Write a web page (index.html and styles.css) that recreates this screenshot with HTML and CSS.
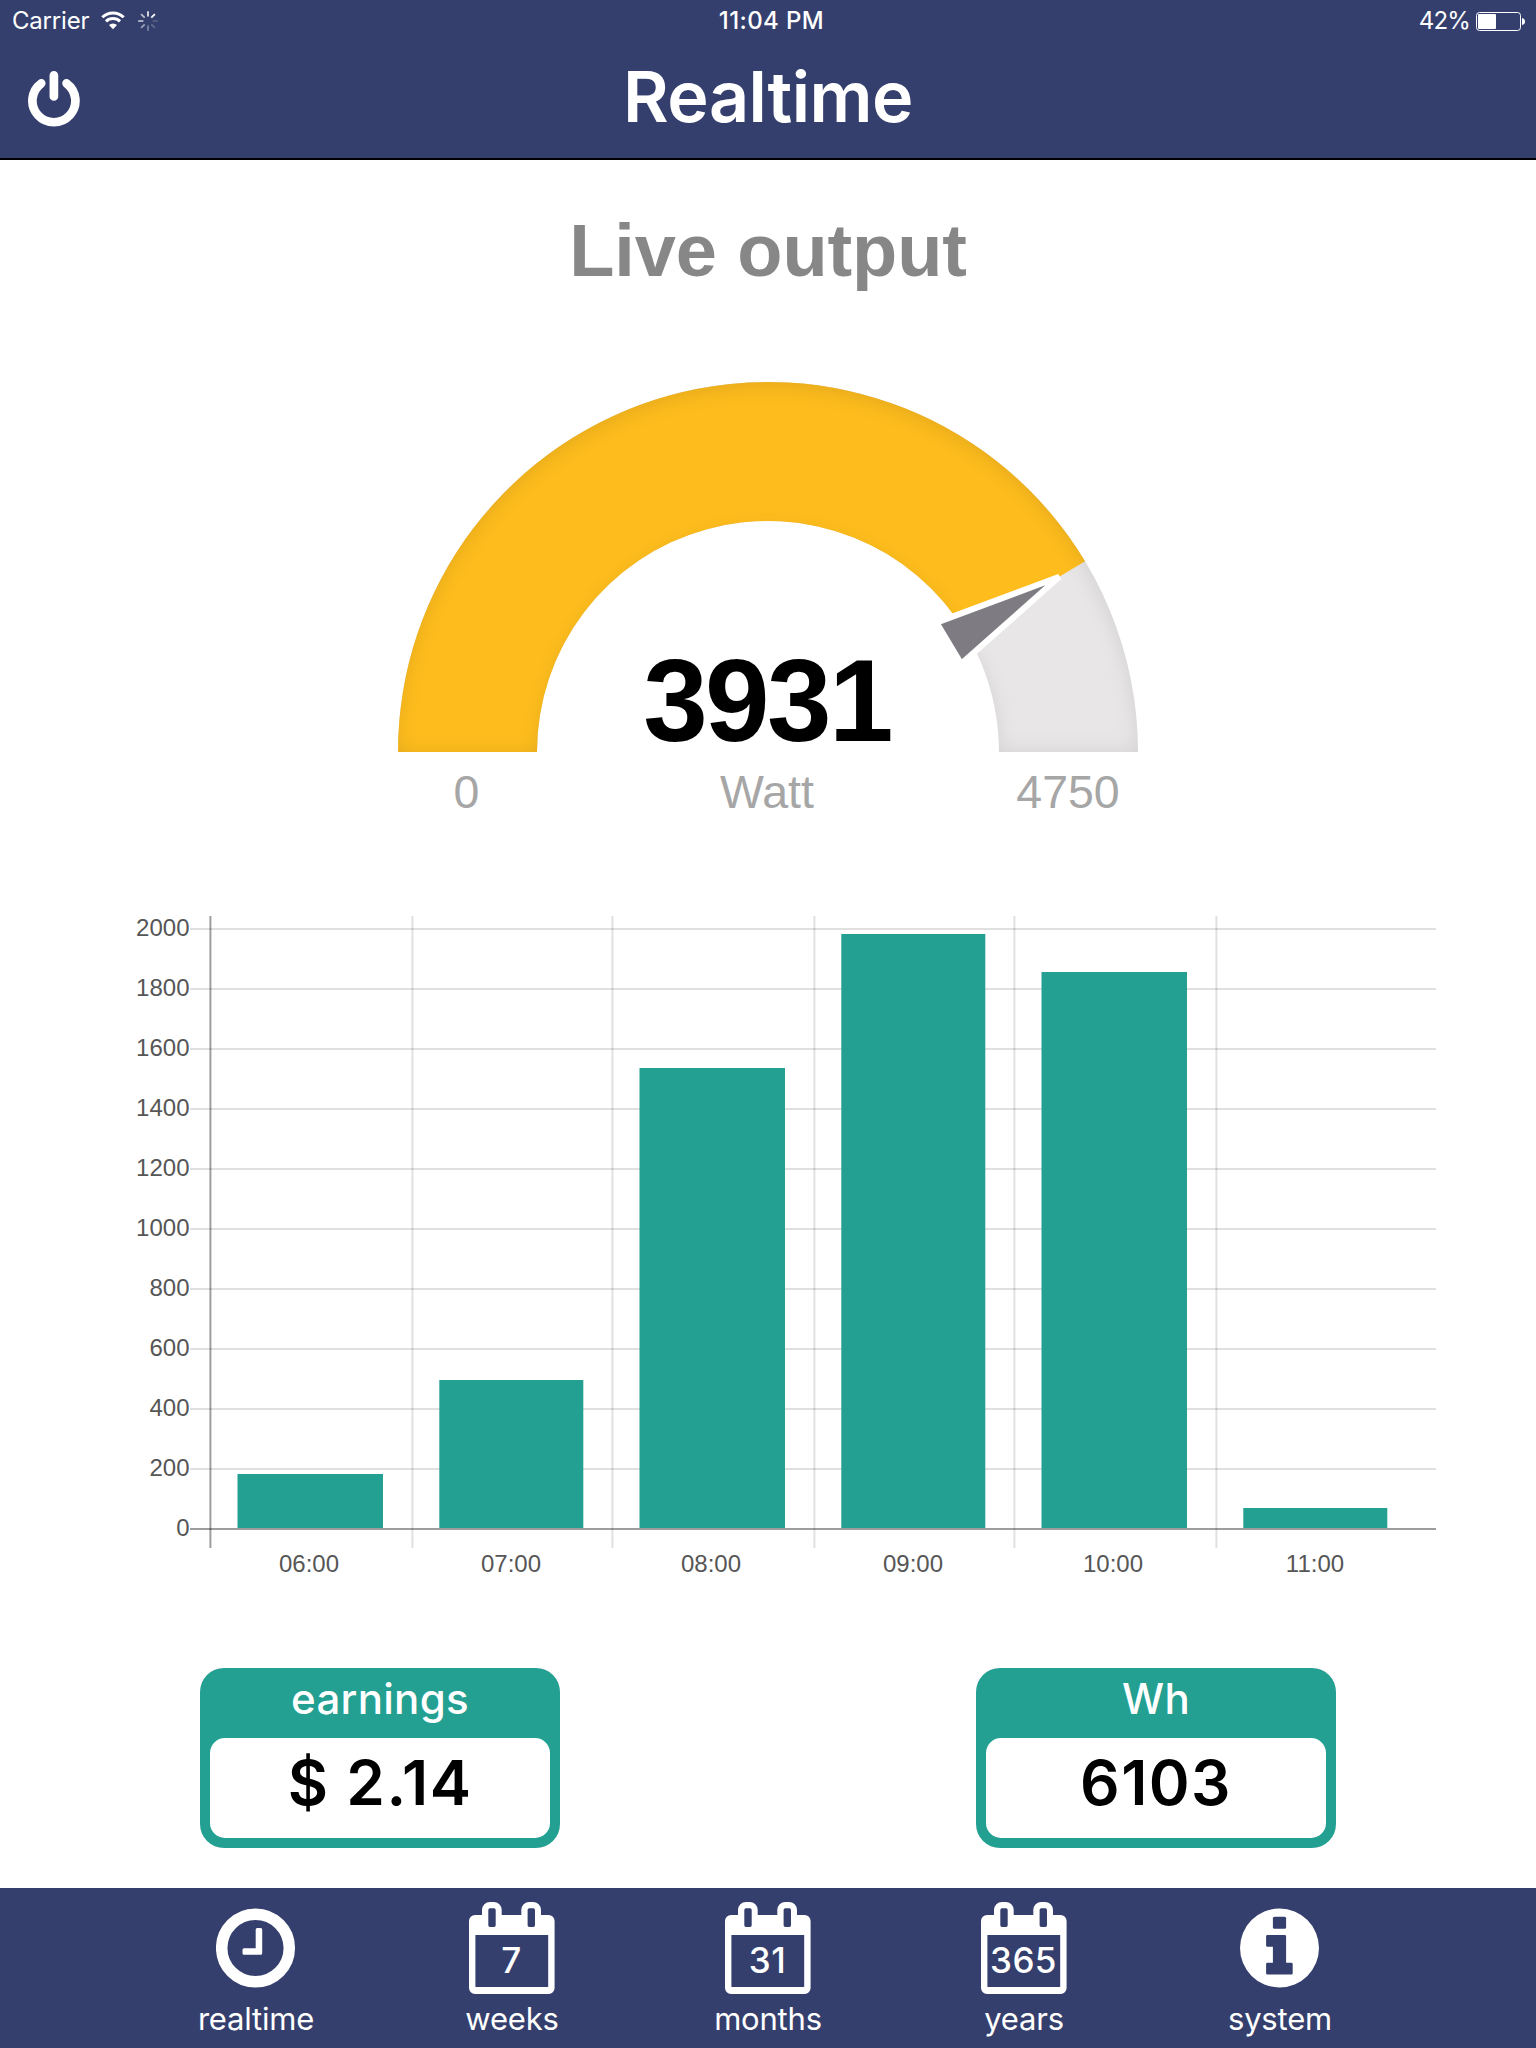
FILE: index.html
```html
<!DOCTYPE html>
<html lang="en">
<head>
    <meta charset="UTF-8">
    <meta name="viewport" content="width=device-width, initial-scale=1.0">
    <title>Realtime</title>
    <link rel="stylesheet" href="styles.css">
</head>
<body>

    <header class="header">
        <div class="status">
            <div class="status-left">
                <span class="carrier">Carrier</span>
                <svg class="wifi" width="24" height="19" viewBox="0 0 24 19">
                    <path d="M1.3 6.3a15.3 15.3 0 0 1 21.4 0" fill="none" stroke="#fff" stroke-width="3"/>
                    <path d="M5 10.4a10 10 0 0 1 14 0" fill="none" stroke="#fff" stroke-width="3"/>
                    <path d="M8 14.1a5.6 5.6 0 0 1 8 0l-4 4.2z" fill="#fff"/>
                </svg>
                <svg class="spinner" width="20" height="20" viewBox="-10 -10 20 20">
                    <path d="M0-4.6V-9.8" opacity=".85"/>
                    <path d="M3.3-3.3L6.9-6.9" opacity="1"/>
                    <path d="M4.6 0H9.8" opacity=".15"/>
                    <path d="M3.3 3.3L6.9 6.9" opacity=".22"/>
                    <path d="M0 4.6V9.8" opacity=".35"/>
                    <path d="M-3.3 3.3L-6.9 6.9" opacity=".5"/>
                    <path d="M-4.6 0H-9.8" opacity=".65"/>
                    <path d="M-3.3-3.3L-6.9-6.9" opacity=".65"/>
                </svg>
            </div>
            <span class="time">11:04 PM</span>
            <div class="status-right">
                <span class="percent">42%</span>
                <svg class="battery" width="49" height="19" viewBox="0 0 49 19">
                    <rect x=".5" y=".5" width="44" height="18" rx="3" fill="none" stroke="#fff"/>
                    <rect x="2" y="2" width="18" height="15" rx="1" fill="#fff"/>
                    <path d="M46 6q3 .5 3 3.500t-3 3.500z" fill="#fff"/>
                </svg>
            </div>
        </div>
        <div class="navbar">
            <svg class="power" width="52" height="57" viewBox="0 0 52 57">
                <path d="M38.600 12.400A21.500 21.500 0 1 1 13.200 12.400M25.900 4.400V25.400" fill="none" stroke="#fff" stroke-width="8.700" stroke-linecap="round"/>
            </svg>
            <h1>Realtime</h1>
            <span class="navbar-end"></span>
        </div>
    </header>

    <main>
        <h2>Live output</h2>

        <svg class="gauge" width="740" height="440" viewBox="0 0 740 440">
            <defs>
                <filter id="inner-shadow" x="0" y="0" width="100%" height="100%">
                    <feOffset dx="0" dy="6"/>
                    <feGaussianBlur stdDeviation="10" result="offset-blur"/>
                    <feComposite operator="out" in="SourceGraphic" in2="offset-blur" result="inverse"/>
                    <feFlood flood-color="black" flood-opacity=".2" result="color"/>
                    <feComposite operator="in" in="color" in2="inverse" result="shadow"/>
                    <feComposite operator="over" in="shadow" in2="SourceGraphic"/>
                </filter>
            </defs>
            <g filter="url(#inner-shadow)">
                <path class="gauge-back" d="M0 370A370 370 0 0 1 740 370H601A231 231 0 0 0 139 370Z"/>
                <path class="gauge-level" d="M0 370A370 370 0 0 1 687.060 179.300L567.930 250.920A231 231 0 0 0 139 370Z"/>
            </g>
            <path class="gauge-pointer" d="M340 0L211 -24V24Z" transform="translate(370 370) rotate(-31.030)"/>
            <text class="gauge-value" x="369" y="359">3931</text>
            <text class="gauge-label" x="68.500" y="426">0</text>
            <text class="gauge-label" x="369" y="426">Watt</text>
            <text class="gauge-label" x="670" y="426">4750</text>
        </svg>

        <svg class="chart" width="1310" height="670" viewBox="130 910 1310 670">
            <g class="grid">
                <path d="M190 929H1436"/>
                <path d="M190 989H1436"/>
                <path d="M190 1049H1436"/>
                <path d="M190 1109H1436"/>
                <path d="M190 1169H1436"/>
                <path d="M190 1229H1436"/>
                <path d="M190 1289H1436"/>
                <path d="M190 1349H1436"/>
                <path d="M190 1409H1436"/>
                <path d="M190 1469H1436"/>
                <path d="M412.400 916V1548"/>
                <path d="M612.400 916V1548"/>
                <path d="M814.400 916V1548"/>
                <path d="M1014.400 916V1548"/>
                <path d="M1216.400 916V1548"/>
            </g>
            <g class="bars">
                <rect x="237.500" y="1474" width="145.500" height="54"/>
                <rect x="439.300" y="1380" width="144" height="148"/>
                <rect x="639.500" y="1068" width="145.500" height="460"/>
                <rect x="841.300" y="934" width="144" height="594"/>
                <rect x="1041.500" y="972" width="145.500" height="556"/>
                <rect x="1243.300" y="1508" width="144" height="20"/>
            </g>
            <g class="axis">
                <path d="M190 1529H1436"/>
                <path d="M210.400 916V1548"/>
            </g>
            <g class="y-labels">
                <text x="189.500" y="936">2000</text>
                <text x="189.500" y="996">1800</text>
                <text x="189.500" y="1056">1600</text>
                <text x="189.500" y="1116">1400</text>
                <text x="189.500" y="1176">1200</text>
                <text x="189.500" y="1236">1000</text>
                <text x="189.500" y="1296">800</text>
                <text x="189.500" y="1356">600</text>
                <text x="189.500" y="1416">400</text>
                <text x="189.500" y="1476">200</text>
                <text x="189.500" y="1536">0</text>
            </g>
            <g class="x-labels">
                <text x="309" y="1572">06:00</text>
                <text x="511" y="1572">07:00</text>
                <text x="711" y="1572">08:00</text>
                <text x="913" y="1572">09:00</text>
                <text x="1113" y="1572">10:00</text>
                <text x="1315" y="1572">11:00</text>
            </g>
        </svg>

        <div class="cards">
            <div class="card">
                <p class="card-title">earnings</p>
                <p class="card-value">$ 2.14</p>
            </div>
            <div class="card">
                <p class="card-title">Wh</p>
                <p class="card-value">6103</p>
            </div>
        </div>
    </main>

    <!-- calendar outline shared by the weeks, months and years tabs -->
    <svg class="symbols" width="0" height="0">
        <symbol id="calendar" viewBox="0 0 86 92">
            <path fill="#fff" fill-rule="evenodd" d="M6 13H13V8a8 8 0 0 1 8-8h3.700a8 8 0 0 1 8 8V13H52.300V8a8 8 0 0 1 8-8h3.700a8 8 0 0 1 8 8V13H79.600a6 6 0 0 1 6 6V86a6 6 0 0 1-6 6H6a6 6 0 0 1-6-6V19a6 6 0 0 1 6-6zM6.400 33V85H79.200V33zM21 6.300a1.700 1.700 0 0 0-1.700 1.700V23.300a1.700 1.700 0 0 0 1.700 1.700h4a1.700 1.700 0 0 0 1.700-1.700V8a1.700 1.700 0 0 0-1.700-1.700zM60.300 6.300a1.700 1.700 0 0 0-1.700 1.700V23.300a1.700 1.700 0 0 0 1.700 1.700h4a1.700 1.700 0 0 0 1.700-1.700V8a1.700 1.700 0 0 0-1.700-1.700z"/>
        </symbol>
    </svg>

    <nav class="tabs">
        <div class="tab">
            <div class="icon">
                <svg width="80" height="92" viewBox="0 0 80 92">
                    <circle cx="39.500" cy="46" r="33.800" fill="none" stroke="#fff" stroke-width="11.500"/>
                    <path d="M41.200 26h3.500q1.500 0 1.500 1.500V51.200q0 1.500-1.500 1.500H28q-1.500 0-1.500-1.500V47.700q0-1.500 1.500-1.500H39.700V27.500q0-1.500 1.500-1.500z" fill="#fff"/>
                </svg>
            </div>
            <span class="tab-label">realtime</span>
        </div>
        <div class="tab">
            <div class="icon">
                <svg width="86" height="92"><use href="#calendar"/></svg>
                <span class="days">7</span>
            </div>
            <span class="tab-label">weeks</span>
        </div>
        <div class="tab">
            <div class="icon">
                <svg width="86" height="92"><use href="#calendar"/></svg>
                <span class="days">31</span>
            </div>
            <span class="tab-label">months</span>
        </div>
        <div class="tab">
            <div class="icon">
                <svg width="86" height="92"><use href="#calendar"/></svg>
                <span class="days">365</span>
            </div>
            <span class="tab-label">years</span>
        </div>
        <div class="tab">
            <div class="icon">
                <svg width="80" height="92" viewBox="0 0 80 92">
                    <circle cx="39.500" cy="46" r="39.500" fill="#fff"/>
                    <g class="info">
                        <rect x="32.900" y="14.800" width="13.200" height="12" rx="1.500"/>
                        <path d="M27.500 33H44.700q1.400 0 1.400 1.400V60.700H51.300q1.400 0 1.400 1.400V71.200q0 1.400-1.400 1.400H27.500q-1.400 0-1.400-1.400V62.100q0-1.400 1.400-1.400H32.900V44.800H27.500q-1.400 0-1.400-1.400V34.400q0-1.400 1.400-1.400z"/>
                    </g>
                </svg>
            </div>
            <span class="tab-label">system</span>
        </div>
    </nav>

</body>
</html>
```
FILE: styles.css
```css
* {
  margin: 0;
  padding: 0;
  box-sizing: border-box;
}
body {
  width: 1536px;
  height: 2048px;
  display: flex;
  flex-direction: column;
  background: white;
  font-family: Inter, "Open Sans", sans-serif;
  overflow: hidden;
}
svg {
  display: block;
}
.header {
  height: 160px;
  background: #353f6d;
  border-bottom: 2px solid black;
  color: white;
}
.status {
  height: 40px;
  display: grid;
  grid-template-columns: 1fr auto 1fr;
  align-items: center;
  padding: 0 11px 0 12px;
  font-size: 24px;
  line-height: 40px;
}
.status-left,
.status-right {
  display: flex;
  align-items: center;
}
.status-right {
  justify-content: flex-end;
}
.carrier {
  width: 89px;
  padding-top: 1px;
  letter-spacing: -0.2px;
}
.spinner {
  margin-left: 13px;
  stroke: white;
  stroke-width: 1.8;
}
.time {
  padding: 1px 0 0 6px;
  font-weight: 500;
  letter-spacing: 0.4px;
}
.percent {
  padding-top: 1px;
  letter-spacing: -0.8px;
}
.battery {
  margin: 1px 0 0 6px;
}
.navbar {
  height: 118px;
  display: flex;
  align-items: center;
  justify-content: space-between;
  padding: 0 28px;
}
.power {
  margin-top: 1px;
}
.navbar-end {
  width: 52px;
}
h1 {
  font-size: 70px;
  font-weight: 600;
  line-height: 84px;
  letter-spacing: -0.5px;
  margin-bottom: 5px;
}
main {
  height: 1728px;
  display: flex;
  flex-direction: column;
  align-items: center;
}
h2 {
  font-family: "Liberation Sans", Arial, sans-serif;
  font-size: 74px;
  line-height: 86px;
  letter-spacing: -0.1px;
  color: #878787;
  margin-top: 48px;
}
.gauge {
  margin-top: 88px;
  font-family: "Liberation Sans", Arial, sans-serif;
  text-anchor: middle;
}
.gauge-back {
  fill: #e8e6e7;
}
.gauge-level {
  fill: #febd1d;
}
.gauge-pointer {
  fill: #7e7c82;
  stroke: white;
  stroke-width: 6;
}
.gauge-value {
  font-size: 116px;
  font-weight: bold;
  letter-spacing: -2.6px;
}
.gauge-label {
  font-size: 46.5px;
  fill: #a6a6a6;
}
.chart {
  margin: 88px 0 0 34px;
  font-family: "Liberation Sans", Arial, sans-serif;
  font-size: 24px;
  fill: #565656;
}
.grid {
  stroke: rgba(0, 0, 0, 0.12);
  stroke-width: 2;
}
.axis {
  stroke: rgba(0, 0, 0, 0.38);
  stroke-width: 2;
}
.bars {
  fill: #23a091;
}
.y-labels {
  text-anchor: end;
}
.x-labels {
  text-anchor: middle;
}
.cards {
  width: 1136px;
  display: flex;
  justify-content: space-between;
  margin-top: 88px;
}
.card {
  width: 360px;
  height: 180px;
  padding: 0 10px 10px;
  background: #23a091;
  border-radius: 24px;
  text-align: center;
}
.card-title {
  height: 70px;
  color: white;
  font-size: 42px;
  font-weight: 550;
  line-height: 61px;
  letter-spacing: 0.3px;
}
.card-value {
  height: 100px;
  background: white;
  border-radius: 15px;
  color: black;
  font-size: 62px;
  font-weight: 600;
  line-height: 89px;
  letter-spacing: 1.4px;
}
.tabs {
  height: 160px;
  display: flex;
  justify-content: center;
  background: #353f6d;
  color: white;
}
.tab {
  width: 256px;
  display: flex;
  flex-direction: column;
  align-items: center;
  padding-top: 14px;
}
.icon {
  height: 92px;
  position: relative;
}
.days {
  position: absolute;
  top: 38px;
  left: 0;
  width: 85px;
  text-align: center;
  font-size: 35px;
  font-weight: 550;
  line-height: 40px;
  letter-spacing: 0.4px;
}
.info {
  fill: #353f6d;
}
.tab-label {
  margin-top: 5px;
  font-size: 31px;
  line-height: 40px;
  letter-spacing: -0.2px;
}
```
